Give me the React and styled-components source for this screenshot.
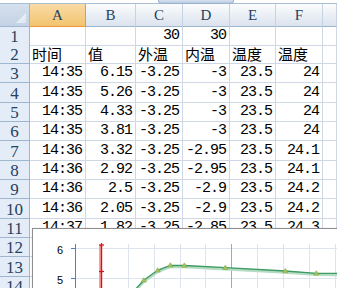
import styled, { createGlobalStyle } from "styled-components"

const GlobalStyle = createGlobalStyle`
  html, body { margin: 0; padding: 0; background: #fff; overflow: hidden; }
`

const COLS = "30px 56px 50px 47px 47px 46px 47px 1fr"

const Sheet = styled.div`
  position: relative;
  width: 337px;
  height: 288px;
  overflow: hidden;
  background: #fff;
`

const TopStrip = styled.div`
  height: 3px;
  border-bottom: 1px solid #a9bfd6;
  background: #fff;
  display: flex;
  padding-left: 158px;
`

const Handle = styled.div`
  width: 74px;
  height: 3px;
  background: linear-gradient(#d6e2f0, #b9cbe2);
  border: 1px solid #9db3cd;
  border-top: none;
  border-radius: 0 0 4px 4px;
`

const Row = styled.div`
  display: grid;
  grid-template-columns: ${COLS};
  height: ${p => p.h}px;
`

const Corner = styled.div`
  position: relative;
  background: linear-gradient(#d5e0ee, #c3d2e5);
  border-right: 1px solid #9eb6ce;
  border-bottom: 1px solid #9eb6ce;
  box-sizing: border-box;
  &::after {
    content: "";
    position: absolute;
    right: 3px;
    bottom: 3px;
    width: 10px;
    height: 10px;
    background: linear-gradient(135deg, #f4f7fb, #dfe6ef);
    clip-path: polygon(100% 0, 100% 100%, 0 100%);
  }
`

const ColHead = styled.div`
  box-sizing: border-box;
  display: flex;
  align-items: center;
  justify-content: center;
  font-family: "Liberation Serif", serif;
  font-size: 15px;
  color: #27415f;
  background: ${p => p.sel
    ? "linear-gradient(#f9dba6, #f3c46f)"
    : "linear-gradient(#fbfcfd, #dbe3ee)"};
  border-right: 1px solid ${p => (p.sel ? "#f29536" : "#c5d3e3")};
  border-bottom: 1px solid ${p => (p.sel ? "#f29536" : "#9eb6ce")};
`

const RowHead = styled.div`
  box-sizing: border-box;
  display: flex;
  align-items: center;
  justify-content: center;
  padding-top: 1px;
  font-family: "Liberation Serif", serif;
  font-size: 17px;
  line-height: 17px;
  color: #27415f;
  background: #e4ecf7;
  border-right: 1px solid #9eb6ce;
  border-bottom: 1px solid #9eb6ce;
`

const Cell = styled.div`
  box-sizing: border-box;
  display: flex;
  align-items: flex-end;
  justify-content: ${p => (p.text ? "flex-start" : "flex-end")};
  padding: ${p => (p.text ? "0 0 1px 2px" : "0 3px 1px 0")};
  border-right: 1px solid #d0d7e5;
  border-bottom: 1px solid #d0d7e5;
  white-space: nowrap;
  color: #000;
`

const Num = styled.span`
  font-family: "Liberation Mono", monospace;
  font-size: 15px;
  letter-spacing: -1px;
  line-height: 16px;
`

const Txt = styled.span`
  font-family: "Noto Sans CJK SC", "Noto Sans", sans-serif;
  font-size: 15px;
  line-height: 17px;
`

const Chart = styled.div`
  position: absolute;
  left: 32px;
  top: 228px;
  width: 330px;
  height: 80px;
  background: #fff;
  border: 1px solid #8e8e8e;
  box-shadow: 0 0 1px rgba(0, 0, 0, 0.2);
`

const rows = [
  ["", "", "30", "30", "", ""],
  ["时间", "值", "外温", "内温", "温度", "温度"],
  ["14:35", "6.15", "-3.25", "-3", "23.5", "24"],
  ["14:35", "5.26", "-3.25", "-3", "23.5", "24"],
  ["14:35", "4.33", "-3.25", "-3", "23.5", "24"],
  ["14:35", "3.81", "-3.25", "-3", "23.5", "24"],
  ["14:36", "3.32", "-3.25", "-2.95", "23.5", "24.1"],
  ["14:36", "2.92", "-3.25", "-2.95", "23.5", "24.1"],
  ["14:36", "2.5", "-3.25", "-2.9", "23.5", "24.2"],
  ["14:36", "2.05", "-3.25", "-2.9", "23.5", "24.2"],
  ["14:37", "1.82", "-3.25", "-2.85", "23.5", "24.3"],
  ["", "", "", "", "", ""],
  ["", "", "", "", "", ""],
  ["", "", "", "", "", ""],
]

const heights = [18, 19, 19, 20, 19, 19, 20, 19, 19, 20, 19, 19, 20, 19]

const green = [
  [101, 62], [110.7, 51.3], [124.7, 41.3], [137.3, 36.3], [151.3, 36.5],
  [192.3, 38.7], [252.3, 42], [283.3, 44.3], [310, 44.5],
]

function tri([x, y]) {
  return `${x},${y - 2.6} ${x + 2.6},${y + 1.8} ${x - 2.6},${y + 1.8}`
}

function ChartArt() {
  const vx = [68, 95, 121, 147, 172, 224, 250, 276, 302]
  const pts = green.map(p => p.join(",")).join(" ")
  return (
    <svg width="330" height="80" style={{ display: "block" }}>
      {[19, 49].map(y => (
        <line key={y} x1="42" y1={y + 0.5} x2="330" y2={y + 0.5} stroke="#dde4ee" />
      ))}
      {vx.map(x => (
        <line key={x} x1={x + 0.5} y1="15" x2={x + 0.5} y2="80" stroke="#dde4ee" />
      ))}
      <line x1="198.5" y1="15" x2="198.5" y2="80" stroke="#a8a8a8" />
      <line x1="42.5" y1="15" x2="42.5" y2="80" stroke="#4f81bd" />
      <line x1="38" y1="19.5" x2="42" y2="19.5" stroke="#4f81bd" />
      <line x1="38" y1="49.5" x2="42" y2="49.5" stroke="#4f81bd" />
      <text x="30" y="25" textAnchor="end" fontFamily="Liberation Sans, sans-serif" fontSize="11" fill="#000">6</text>
      <text x="30" y="55" textAnchor="end" fontFamily="Liberation Sans, sans-serif" fontSize="11" fill="#000">5</text>
      <line x1="67" y1="16" x2="67" y2="80" stroke="#f7a0a0" strokeWidth="2" />
      <line x1="68.5" y1="16" x2="68.5" y2="80" stroke="#e01010" strokeWidth="1.4" />
      {[16, 42.5].map(y => (
        <g key={y} stroke="#e01010" strokeWidth="1.2">
          <line x1="66" y1={y} x2="71" y2={y} />
          <line x1="68.5" y1={y - 2} x2="68.5" y2={y + 2} />
        </g>
      ))}
      <polyline points={green.map(([x, y]) => `${x},${y + 1.2}`).join(" ")} fill="none" stroke="#b4dcc2" strokeWidth="3" strokeLinejoin="round" />
      <polyline points={pts} fill="none" stroke="#3c9a62" strokeWidth="1.3" strokeLinejoin="round" />
      {green.slice(1).map(p => (
        <polygon key={p[0]} points={tri(p)} fill="#a4c45c" stroke="#8aa845" strokeWidth="0.6" />
      ))}
    </svg>
  )
}

export default function App() {
  return (
    <Sheet>
      <GlobalStyle />
      <TopStrip><Handle /></TopStrip>
      <Row h={23}>
        <Corner />
        {["A", "B", "C", "D", "E", "F", ""].map((c, i) => (
          <ColHead key={i} sel={i === 0}>{c}</ColHead>
        ))}
      </Row>
      {rows.map((r, i) => (
        <Row key={i} h={heights[i]}>
          <RowHead>{i + 1}</RowHead>
          {r.map((v, j) => {
            const text = /[^\d:.\-]/.test(v)
            return (
              <Cell key={j} text={text ? 1 : 0}>
                {v && (text ? <Txt>{v}</Txt> : <Num>{v}</Num>)}
              </Cell>
            )
          })}
          <Cell />
        </Row>
      ))}
      <Chart>
        <ChartArt />
      </Chart>
    </Sheet>
  )
}
